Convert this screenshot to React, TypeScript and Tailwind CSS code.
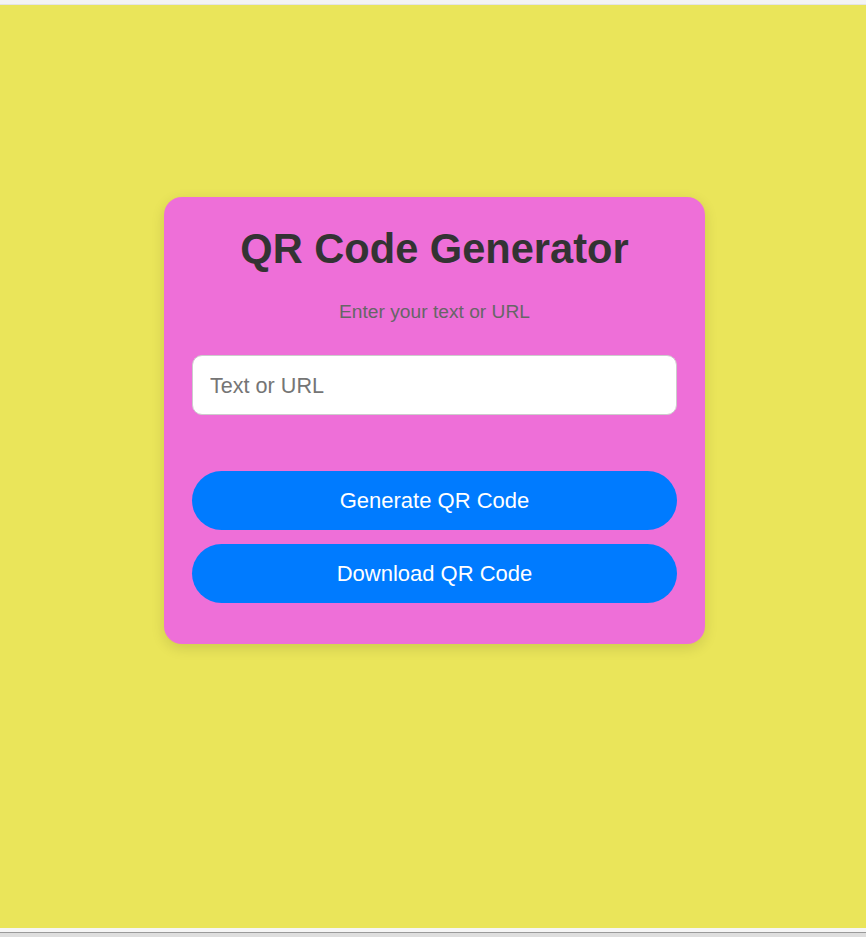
export default function App() {
  return (
    <div
      className="w-[866px] h-[937px] flex flex-col overflow-hidden"
      style={{ fontFamily: '"Liberation Sans", Arial, sans-serif' }}
    >
      <div className="h-[5px] bg-[#f3f3f3] border-b border-[#e4e4e4]" />
      <div className="flex-1 bg-[#eae55a] flex justify-start">
        <div className="ml-[164px] mt-[192px] w-[541px] h-[447px] bg-[#ee6fd8] rounded-[18px] shadow-[0_4px_14px_rgba(0,0,0,0.12)] px-[28px] pt-[28px] flex flex-col">
          <h1 className="text-center text-[41.6px] leading-[48px] font-bold text-[#333333]">
            QR Code Generator
          </h1>
          <p className="mt-[27px] text-center text-[19.2px] leading-[24px] text-[#666666]">
            Enter your text or URL
          </p>
          <input
            type="text"
            placeholder="Text or URL"
            className="mt-[31px] h-[60px] w-full rounded-[10px] border border-[#cccccc] bg-white px-[17px] pt-[2px] text-[21.6px] text-[#333] placeholder:text-[#757575] outline-none"
          />
          <button className="mt-[56px] h-[59px] w-full rounded-full bg-[#007bff] text-white text-[22px]">
            Generate QR Code
          </button>
          <button className="mt-[14px] h-[59px] w-full rounded-full bg-[#007bff] text-white text-[22px]">
            Download QR Code
          </button>
        </div>
      </div>
      <div className="h-[4px] bg-[#f5f5f5]" />
      <div className="h-[1px] bg-[#9a9a9a]" />
      <div className="h-[4px] bg-[#dedede]" />
    </div>
  );
}
